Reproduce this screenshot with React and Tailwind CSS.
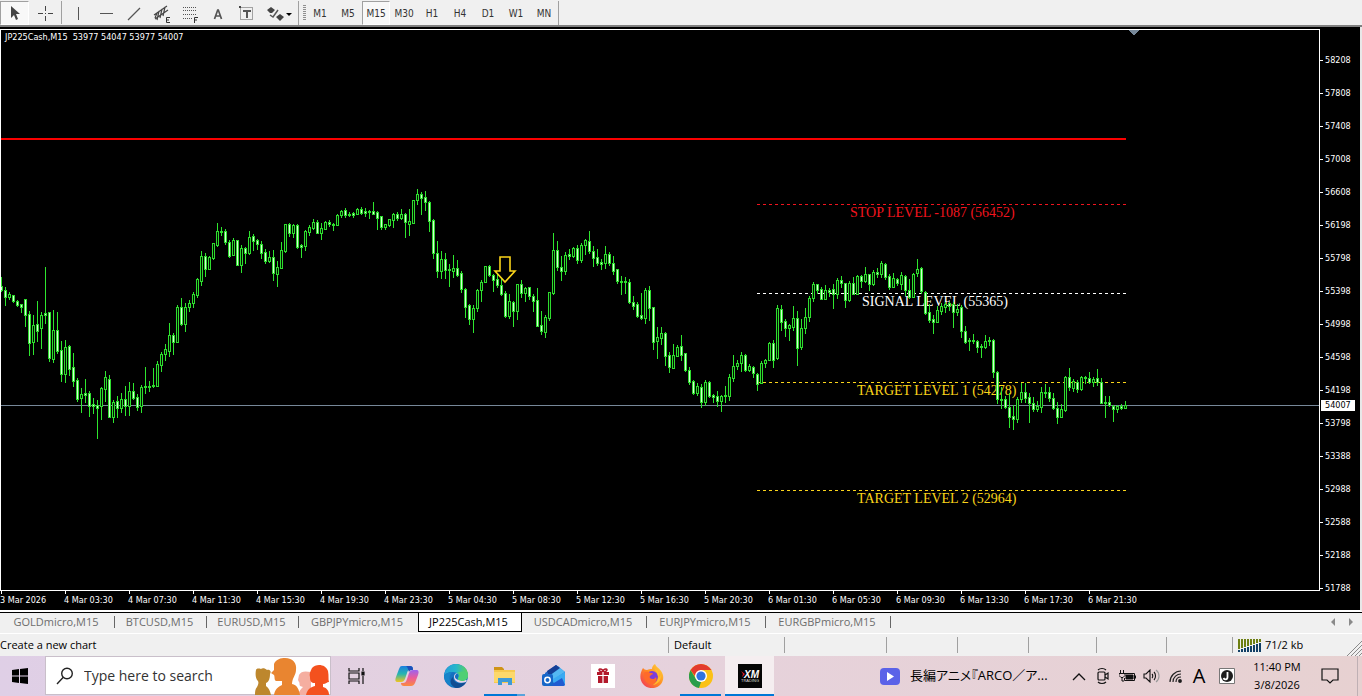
import React, { useState } from "react";
import clsx from "clsx";

// Candles, oldest first: [high, open, close, low] as y positions on the chart
const CANDLES = [
  [277, 286, 290, 291], [287, 290, 297, 305], [292, 297, 294, 299], [295, 295, 301, 302],
  [300, 301, 305, 306], [304, 304, 307, 312], [299, 299, 315, 326], [311, 314, 343, 355],
  [315, 342, 325, 354], [301, 324, 331, 341], [312, 328, 315, 348], [267, 313, 315, 323],
  [312, 312, 358, 361], [310, 359, 330, 362], [312, 330, 351, 353], [341, 350, 374, 381],
  [340, 374, 347, 382], [345, 346, 369, 375], [353, 367, 381, 386], [378, 380, 399, 401],
  [388, 398, 394, 412], [379, 393, 395, 402], [391, 393, 406, 416], [398, 404, 406, 413],
  [400, 405, 408, 438], [387, 406, 388, 419], [371, 389, 377, 401], [375, 379, 417, 417],
  [400, 417, 402, 422], [396, 401, 408, 417], [393, 408, 399, 412], [386, 399, 406, 415],
  [382, 406, 391, 415], [383, 391, 398, 399], [394, 397, 407, 410], [385, 406, 387, 412],
  [367, 386, 387, 393], [381, 386, 387, 391], [368, 385, 386, 387], [361, 386, 364, 386],
  [352, 365, 354, 371], [344, 354, 349, 360], [323, 351, 335, 356], [333, 335, 342, 354],
  [305, 342, 307, 342], [298, 307, 324, 325], [303, 324, 307, 331], [300, 307, 303, 311],
  [292, 303, 294, 307], [278, 295, 279, 297], [251, 281, 256, 285], [253, 256, 269, 276],
  [256, 269, 257, 269], [243, 258, 243, 259], [223, 245, 231, 246], [227, 231, 232, 235],
  [229, 231, 242, 244], [240, 242, 256, 257], [238, 255, 240, 255], [240, 240, 265, 265],
  [245, 265, 248, 272], [247, 248, 253, 263], [231, 253, 237, 254], [234, 236, 241, 250],
  [239, 240, 244, 249], [241, 244, 253, 258], [249, 252, 261, 263], [251, 261, 257, 262],
  [250, 257, 273, 280], [261, 274, 267, 286], [242, 268, 250, 268], [224, 251, 224, 252],
  [223, 224, 233, 236], [224, 233, 225, 237], [224, 225, 247, 248], [244, 245, 247, 257],
  [230, 246, 231, 250], [225, 232, 227, 235], [219, 228, 222, 229], [220, 222, 233, 233],
  [223, 233, 228, 239], [221, 229, 222, 229], [220, 222, 224, 226], [223, 224, 225, 230],
  [214, 225, 215, 225], [210, 215, 211, 217], [208, 210, 215, 217], [212, 214, 215, 216],
  [212, 213, 215, 217], [208, 214, 209, 214], [207, 209, 213, 214], [208, 211, 213, 216],
  [210, 211, 212, 218], [202, 211, 214, 214], [211, 212, 218, 229], [216, 216, 227, 229],
  [224, 227, 224, 229], [219, 225, 219, 226], [213, 220, 214, 227], [212, 214, 218, 220],
  [209, 218, 214, 219], [213, 214, 222, 237], [209, 224, 221, 235], [200, 223, 200, 223],
  [189, 200, 194, 204], [192, 194, 198, 214], [191, 197, 202, 210], [201, 202, 221, 231],
  [219, 220, 253, 258], [241, 253, 271, 277], [251, 271, 259, 278], [253, 259, 270, 278],
  [264, 269, 270, 286], [255, 271, 268, 277], [260, 268, 275, 276], [271, 273, 289, 292],
  [288, 289, 307, 317], [304, 305, 319, 324], [305, 319, 308, 332], [289, 308, 290, 311],
  [280, 290, 282, 301], [266, 282, 266, 282], [265, 266, 275, 276], [274, 275, 280, 291],
  [274, 279, 285, 287], [278, 285, 294, 295], [291, 293, 316, 317], [294, 316, 301, 318],
  [301, 302, 311, 326], [284, 311, 284, 319], [280, 284, 293, 297], [287, 293, 288, 301],
  [287, 287, 296, 299], [294, 296, 301, 311], [288, 300, 326, 326], [311, 325, 331, 334],
  [315, 332, 317, 337], [292, 318, 292, 320], [233, 293, 250, 294], [241, 250, 267, 270],
  [256, 267, 271, 280], [252, 271, 255, 274], [249, 254, 256, 259], [247, 256, 248, 257],
  [245, 248, 260, 263], [243, 260, 245, 262], [239, 245, 240, 254], [231, 241, 251, 253],
  [246, 251, 258, 266], [249, 257, 263, 265], [259, 262, 264, 269], [246, 263, 254, 268],
  [252, 254, 263, 265], [256, 263, 271, 274], [269, 269, 281, 283], [276, 281, 282, 294],
  [277, 281, 282, 293], [279, 282, 302, 303], [296, 302, 306, 309], [302, 304, 316, 317],
  [293, 315, 318, 319], [288, 318, 290, 323], [286, 290, 308, 320], [307, 307, 342, 349],
  [327, 341, 337, 358], [327, 338, 333, 344], [332, 333, 356, 365], [352, 355, 367, 372],
  [344, 368, 355, 368], [345, 356, 347, 356], [335, 346, 355, 360], [353, 353, 370, 371],
  [367, 370, 382, 384], [380, 381, 393, 394], [383, 393, 386, 395], [384, 387, 402, 407],
  [380, 402, 382, 405], [381, 382, 396, 397], [394, 395, 397, 402], [391, 396, 401, 406],
  [395, 401, 396, 411], [386, 395, 396, 402], [374, 396, 377, 400], [355, 378, 366, 381],
  [360, 366, 363, 369], [352, 363, 355, 371], [354, 355, 370, 371], [364, 370, 366, 371],
  [366, 367, 373, 377], [373, 374, 384, 390], [361, 383, 363, 383], [359, 363, 360, 367],
  [342, 360, 343, 360], [340, 343, 360, 367], [305, 358, 308, 359], [305, 309, 322, 330],
  [319, 321, 328, 336], [324, 328, 325, 340], [306, 327, 318, 330], [311, 318, 348, 365],
  [319, 347, 328, 349], [308, 328, 317, 333], [296, 317, 298, 321], [282, 298, 284, 301],
  [284, 284, 290, 293], [287, 289, 299, 299], [285, 299, 290, 299], [288, 290, 292, 296],
  [284, 289, 294, 308], [278, 294, 280, 298], [276, 280, 283, 287], [283, 283, 300, 307],
  [281, 300, 283, 301], [277, 283, 294, 294], [275, 294, 276, 294], [275, 276, 281, 287],
  [267, 281, 274, 282], [274, 274, 284, 290], [270, 284, 272, 285], [268, 272, 274, 277],
  [261, 274, 263, 277], [263, 264, 277, 279], [274, 276, 287, 289], [273, 287, 278, 287],
  [278, 279, 283, 285], [272, 284, 275, 289], [275, 276, 290, 295], [279, 290, 297, 298],
  [273, 297, 274, 297], [259, 273, 269, 276], [267, 268, 291, 293], [291, 292, 313, 314],
  [304, 312, 320, 322], [315, 319, 322, 333], [306, 322, 310, 322], [303, 311, 306, 314],
  [302, 307, 304, 312], [302, 303, 306, 310], [302, 304, 312, 327], [304, 312, 309, 315],
  [305, 307, 331, 337], [326, 331, 342, 343], [338, 340, 341, 350], [334, 340, 341, 343],
  [340, 341, 347, 352], [344, 346, 347, 357], [335, 347, 341, 348], [337, 340, 341, 345],
  [339, 340, 372, 377], [371, 372, 399, 403], [387, 399, 400, 408], [396, 399, 407, 408],
  [393, 407, 417, 427], [405, 416, 419, 429], [397, 419, 399, 422], [383, 399, 392, 402],
  [383, 392, 398, 402], [393, 397, 403, 422], [397, 403, 409, 411], [401, 409, 406, 411],
  [387, 407, 392, 412], [384, 392, 393, 397], [387, 392, 398, 401], [393, 398, 408, 409],
  [402, 408, 417, 423], [404, 417, 409, 417], [376, 410, 377, 411], [368, 377, 387, 390],
  [379, 388, 381, 391], [380, 382, 389, 392], [376, 389, 377, 390], [376, 377, 378, 383],
  [372, 378, 382, 383], [377, 382, 379, 386], [369, 378, 382, 385], [378, 382, 403, 403],
  [396, 402, 403, 417], [396, 402, 405, 406], [405, 406, 409, 421], [405, 409, 406, 412],
  [404, 406, 408, 409], [401, 408, 405, 408],
];

const LEVELS = [
  { y: 204, x: 850, color: "#f0141e", text: "STOP LEVEL -1087 (56452)" },
  { y: 293, x: 862, color: "#ffffff", text: "SIGNAL LEVEL (55365)" },
  { y: 382, x: 857, color: "#fad41a", text: "TARGET LEVEL 1 (54278)" },
  { y: 490, x: 857, color: "#fad41a", text: "TARGET LEVEL 2 (52964)" },
];

const PRICES = [
  58208, 57808, 57408, 57008, 56608, 56198, 55798, 55398, 54998, 54598, 54198,
  53798, 53388, 52988, 52588, 52188, 51788,
];

const TIMES = [
  "3 Mar 2026", "4 Mar 03:30", "4 Mar 07:30", "4 Mar 11:30", "4 Mar 15:30",
  "4 Mar 19:30", "4 Mar 23:30", "5 Mar 04:30", "5 Mar 08:30", "5 Mar 12:30",
  "5 Mar 16:30", "5 Mar 20:30", "6 Mar 01:30", "6 Mar 05:30", "6 Mar 09:30",
  "6 Mar 13:30", "6 Mar 17:30", "6 Mar 21:30",
];

const TIMEFRAMES = ["M1", "M5", "M15", "M30", "H1", "H4", "D1", "W1", "MN"];

const TABS = [
  { name: "GOLDmicro,M15", width: "w-[115px]" },
  { name: "BTCUSD,M15", width: "w-[92px]" },
  { name: "EURUSD,M15", width: "w-[92px]" },
  { name: "GBPJPYmicro,M15", width: "w-[119px]" },
  { name: "JP225Cash,M15", width: "w-[104px]" },
  { name: "USDCADmicro,M15", width: "w-[125px]" },
  { name: "EURJPYmicro,M15", width: "w-[119px]" },
  { name: "EURGBPmicro,M15", width: "w-[125px]" },
];

// Drawing tools
const TOOLS = [
  {
    name: "Vertical line",
    icon: <path d="M12.500 6v13" stroke="#555" />,
  },
  {
    name: "Horizontal line",
    icon: <path d="M6 12.500h13" stroke="#555" />,
  },
  {
    name: "Trendline",
    icon: <path d="M6 19 18 7" stroke="#555" strokeWidth="1.200" />,
  },
  {
    name: "Equidistant channel",
    icon: (
      <>
        <path
          d="M4 14 17 5M5 18 18 9M7 19 9 10M10 17l2-9M13 15l2-9M5 17l2-5"
          stroke="#444"
          strokeWidth="1.200"
        />
        <path d="M20 16.500h-3.500v5H20M16.500 19H19" stroke="#333" />
      </>
    ),
  },
  {
    name: "Fibonacci retracement",
    icon: (
      <>
        <path
          d="M5 6.500h14M5 9.500h14M5 13.500h14M5 17.500h9"
          stroke="#555"
          strokeDasharray="1 1"
        />
        <path d="M20 16.500h-3.500V22M16.500 19H19" stroke="#333" />
      </>
    ),
  },
  {
    name: "Text",
    icon: <path d="m8.500 18 3.200-9h.6l3.200 9M9.700 15h4.600" stroke="#555" strokeWidth="1.700" />,
  },
  {
    name: "Text label",
    icon: (
      <>
        <rect x="6.500" y="6.500" width="12" height="12" stroke="#555" strokeDasharray="1 1" />
        <path d="M9 10h8M13 10v7" stroke="#555" strokeWidth="2" />
        <path d="M5 5h2v2H5z" fill="#444" />
      </>
    ),
  },
];

function Candle({ x, data }) {
  const [high, open, close, low] = data;
  const top = Math.min(open, close);
  const bottom = Math.max(open, close);
  return (
    <g>
      <rect x={x} y={high} width="1" height={low - high + 1} fill="#2ee62e" />
      <rect x={x - 1} y={top} width="3" height={bottom - top + 1} fill="#2edc2e" />
      {bottom - top > 1 && (
        <rect
          x={x}
          y={top + 1}
          width="1"
          height={bottom - top - 1}
          fill={open > close ? "#001400" : "#d4ffd4"}
        />
      )}
    </g>
  );
}

function PriceChart() {
  return (
    <svg
      width="1318"
      height="560"
      viewBox="1 30 1318 560"
      shapeRendering="crispEdges"
      role="img"
      aria-label="JP225Cash, M15"
    >
      <path d="M1128 30h11l-5 5z" fill="#778899" />
      <rect x="1" y="138" width="1125" height="2" fill="#fa0000" />
      {LEVELS.map((level) => (
        <g key={level.text}>
          <path
            d={`M757 ${level.y}.500H1126`}
            stroke={level.color}
            strokeDasharray="3 3"
          />
          <text
            x={level.x}
            y={level.y + 13}
            fill={level.color}
            className="text-[14px] font-['Georgia','Liberation_Serif',serif]"
          >
            {level.text}
          </text>
        </g>
      ))}
      <rect x="0" y="405" width="1320" height="1" fill="#778899" />
      {CANDLES.map((candle, index) => (
        <Candle key={index} x={1 + index * 4} data={candle} />
      ))}
      <path
        d="M500 257h10v14h5l-10 11-10-11h5z"
        fill="none"
        stroke="#fad41a"
        strokeWidth="1.600"
        shapeRendering="auto"
      />
    </svg>
  );
}

function Toolbar() {
  const [frame, setFrame] = useState("M15");
  return (
    <header className="flex h-[27px] shrink-0 items-stretch border-b-2 border-[#808080] bg-[#f0f0f0] pt-px font-['DejaVu_Sans_Condensed','DejaVu_Sans',sans-serif] text-[10px] text-[#333]">
      <button
        aria-label="Cursor"
        className="flex w-[29px] items-center justify-center border border-t-[#a0a0a0] border-r-white border-b-white border-l-[#a0a0a0] bg-[#f8f8f8]"
      >
        <svg width="12" height="16" viewBox="0 0 12 16" fill="#444">
          <path d="M2 1v12l3-3 2 5 2-1-2-5h4z" />
        </svg>
      </button>
      <button aria-label="Crosshair" className="flex w-[32px] items-center justify-center">
        <svg width="17" height="17" viewBox="0 0 17 17" stroke="#444">
          <path d="M8.500 1v5M8.500 11v5M1 8.500h5M11 8.500h5M8 8.500h1" />
        </svg>
      </button>
      <span className="mr-[2px] mb-px w-px bg-[#a0a0a0]" />
      {TOOLS.map((tool) => (
        <button
          key={tool.name}
          aria-label={tool.name}
          className="flex w-7 items-center justify-center"
        >
          <svg width="25" height="24" viewBox="0 0 25 24" fill="none">
            {tool.icon}
          </svg>
        </button>
      ))}
      <button aria-label="Arrows" className="flex w-[38px] items-center justify-center">
        <svg width="26" height="24" viewBox="0 0 26 24" fill="#444">
          <path d="m1 9 4-3 4 3-3 3H4zM10 16l4-3 4 3-4 4z" />
          <path d="m4 14 3 2 5-7" stroke="#555" fill="none" strokeWidth="1.500" />
          <path d="M20 12h6l-3 3z" fill="#000" />
        </svg>
      </button>
      <span className="w-px bg-[#a0a0a0]" />
      <span className="mx-1 my-1 w-[3px] bg-[repeating-linear-gradient(#909090_0_1px,#f0f0f0_1px_2px)]" />
      <div className="-ml-1 flex">
        {TIMEFRAMES.map((name) => (
          <button
            key={name}
            onClick={() => setFrame(name)}
            className={clsx(
              "w-7 border pt-px",
              frame === name
                ? "border-t-[#a0a0a0] border-r-white border-b-white border-l-[#a0a0a0] bg-[#f8f8f8]"
                : "border-transparent"
            )}
          >
            {name}
          </button>
        ))}
      </div>
      <span className="w-px bg-[#a0a0a0]" />
    </header>
  );
}

function ChartWindow() {
  return (
    <main className="flex-1 border-r-2 border-b border-r-[#e8e8e8] border-b-white bg-black pt-[2px] font-['DejaVu_Sans_Condensed','DejaVu_Sans',sans-serif] text-[9px] text-white">
      <div className="flex h-[562px]">
        <section className="relative min-w-0 flex-1 overflow-hidden border border-white">
          <PriceChart />
          <p className="absolute top-px left-1 whitespace-pre">
            JP225Cash,M15{"  "}53977 54047 53977 54007
          </p>
        </section>
        <aside className="relative w-10 shrink-0 pt-[15px]">
          {PRICES.map((price) => (
            <div key={price} className="flex h-[33px] items-center gap-[2px]">
              <span className="h-px w-[3px] bg-white" />
              {price}
            </div>
          ))}
          <span className="absolute top-[371px] left-px flex h-[11px] w-[34px] items-center bg-white pl-1 text-black">
            54007
          </span>
        </aside>
      </div>
      <div className="flex overflow-hidden">
        {TIMES.map((time) => (
          <div key={time} className="w-16 shrink-0">
            <div className="ml-px h-[3px] w-px bg-white" />
            <div className="h-4 whitespace-nowrap leading-[13px]">{time}</div>
          </div>
        ))}
      </div>
    </main>
  );
}

function ChartTabs() {
  const [active, setActive] = useState("JP225Cash,M15");
  const activeIndex = TABS.findIndex((tab) => tab.name === active);
  return (
    <nav className="mt-px flex h-[22px] shrink-0 items-start border-t border-b border-t-black border-b-white bg-[#f0f0f0] font-['Open_Sans',sans-serif] text-[11px] text-[#6d6d6d]">
      {TABS.map((tab, index) => (
        <button
          key={tab.name}
          onClick={() => setActive(tab.name)}
          className={clsx(
            "flex items-center justify-center pr-[3px] whitespace-nowrap",
            tab.width,
            index === activeIndex
              ? "h-[19px] border border-t-0 border-black bg-white text-black"
              : "relative h-[18px]"
          )}
        >
          {tab.name}
          {index !== activeIndex && index + 1 !== activeIndex && (
            <span className="absolute top-[3px] right-0 h-3 w-px bg-[#666]" />
          )}
        </button>
      ))}
      <div className="ml-auto flex h-[18px] items-center gap-3 pr-2">
        <button aria-label="Scroll left">
          <svg width="6" height="8" viewBox="0 0 6 8" fill="#8a8a8a">
            <path d="M5 0v8L1 4z" />
          </svg>
        </button>
        <button aria-label="Scroll right">
          <svg width="6" height="8" viewBox="0 0 6 8" fill="#8a8a8a">
            <path d="M1 0v8l4-4z" />
          </svg>
        </button>
      </div>
    </nav>
  );
}

function StatusBar() {
  const cell = "my-[3px] border-l border-[#a0a0a0]";
  return (
    <footer className="flex h-[22px] shrink-0 bg-[#f0f0f0] font-['Open_Sans',sans-serif] text-[11px] leading-4 text-black">
      <span className="my-[3px] flex-1">Create a new chart</span>
      <span className={clsx(cell, "w-[116px] pl-[5px]")}>Default</span>
      <span className={clsx(cell, "w-[102px]")} />
      <span className={clsx(cell, "w-[71px]")} />
      <span className={clsx(cell, "w-[71px]")} />
      <span className={clsx(cell, "w-[68px]")} />
      <span className={clsx(cell, "w-[70px]")} />
      <span className={clsx(cell, "w-[66px]")} />
      <span className={clsx(cell, "flex w-[115px] items-center gap-[3px] pl-[5px]")}>
        <svg width="24" height="13" viewBox="0 0 24 13" shapeRendering="crispEdges">
          {[0, 1, 2, 3, 4, 5, 6, 7].map((bar) => (
            <g key={bar}>
              <rect x={bar * 3} y="0" width="2" height={10 - bar} fill="#6d7f12" />
              <rect x={bar * 3} y={11 - bar} width="2" height={2 + bar} fill="#123f66" />
            </g>
          ))}
        </svg>
        71/2 kb
      </span>
      <svg width="15" height="15" viewBox="0 0 15 15" className="self-end" stroke="#8a8a8a">
        <path d="M0 15 15 0M4 15 15 4M8 15l7-7M12 15l3-3" />
      </svg>
    </footer>
  );
}

function PeopleArt() {
  return (
    <svg width="78" height="38" viewBox="0 0 78 38">
      <path d="M4 13c-1 5 0 9 2 11 1 2 0 4-1 6-2 2-2 5-2 8h16c-1-4-2-7-5-9v-3c3-1 4-5 4-9 2-3-1-5-3-4-2-2-5-2-6-1-3-1-5 0-5 1z" fill="#bd872d" />
      <path d="M47 18c2-4 6-4 12-3v23H46c1-4 3-6 5-8l-3-1c-1-2 0-3-1-4l-1-2z" fill="#f5aea0" />
      <path d="M22 7c2-5 7-6 11-6 8 0 12 5 11 12 0 5-4 8-4 14 5 1 7 5 8 11H22c1-6 4-8 8-10v-4h-6c-2-1-1-4-2-6l-3-2 3-3z" fill="#e98530" />
      <path d="M60 11c4-5 14-4 16 3 1 5 0 8 1 11-2 0-3 2-6 2v3c4 1 6 4 6 8H54c1-5 4-8 9-9v-3c-4 0-5-2-5-6-1-3 0-5 2-9z" fill="#f4511e" />
    </svg>
  );
}

const APPS = [
  {
    name: "Copilot",
    icon: (
      <>
        <defs>
          <linearGradient id="copilotLeft" x1="0" y1="0" x2="0" y2="1">
            <stop offset="0" stopColor="#1b7fe0" />
            <stop offset=".5" stopColor="#26b5b0" />
            <stop offset="1" stopColor="#f2c51d" />
          </linearGradient>
          <linearGradient id="copilotRight" x1="0" y1="0" x2="0" y2="1">
            <stop offset="0" stopColor="#9b62f0" />
            <stop offset=".5" stopColor="#ec5c98" />
            <stop offset="1" stopColor="#fb8b3d" />
          </linearGradient>
        </defs>
        <path d="M7 2h8c2 0 3 1 3 3h-2c-2 0-3 1-4 4l-2 6c-1 2-2 3-4 3H3c-3 0-3-2-2-5L4 5c1-2 1-3 3-3z" fill="url(#copilotLeft)" />
        <path d="M18 6h3c3 0 3 2 2 5l-3 8c-1 2-2 3-4 3H9c-2 0-3-1-3-3h2c2 0 3-1 4-4l2-6c1-2 2-3 4-3z" fill="url(#copilotRight)" />
        <path d="M11 2h4c2 0 3 1 3 4-2 0-3 0-4 2-1-2-1-5-3-6z" fill="#1c50ba" />
      </>
    ),
  },
  {
    name: "Microsoft Edge",
    icon: (
      <>
        <defs>
          <linearGradient id="edgeTop" x1="0" y1="0" x2="1" y2="0">
            <stop offset="0" stopColor="#249ddb" />
            <stop offset=".5" stopColor="#27b6cb" />
            <stop offset="1" stopColor="#5fd553" />
          </linearGradient>
        </defs>
        <circle cx="12" cy="12" r="12" fill="#1471c0" />
        <path d="M0 12C1 4 6 0 12 0c7 0 12 5 12 11 0 4-3 6-6 6-3 0-5-1-4-3 2-3-1-6-5-6-5 0-8 2-9 4z" fill="url(#edgeTop)" />
        <path d="M9 8c-4 2-6 10 2 15-7-1-11-6-11-11 2-3 5-4 9-4z" fill="#1683c9" />
        <path d="M9 13c0 6 7 8 13 5-2 4-6 6-10 6-6-2-7-8-3-11z" fill="#124d92" />
        <path d="M14 9c-4 1-6 9 8 7 1 0 1 1 0 2-5 2-12 0-12-5 0-2 1-4 4-4z" fill="#e9d7e8" />
        <path d="M13 9c3 0 3 3 1 5 0 2 2 3 4 3 3 0 6-2 6-6 0-3-5-5-11-2z" fill="#4fcf74" />
      </>
    ),
  },
  {
    name: "File Explorer",
    mark: "explorer",
    icon: (
      <>
        <path d="M1 3h8l2 2v4H1z" fill="#cf9417" />
        <path d="M1 6h21v13H1z" fill="#f6c94f" />
        <path d="M1 8h21v10H1z" fill="#fcd86a" />
        <path d="M5 21v-7h14v7h-4v-3H9v3z" fill="#3e9ad6" />
      </>
    ),
  },
  {
    name: "Outlook",
    icon: (
      <>
        <path d="M3 9 14 1l9 7v12H3z" fill="#2267c9" />
        <path d="m8 8 8-6 7 6-12 8z" fill="#54b8f2" />
        <path d="m5 7 9-6 4 3-11 8z" fill="#153f96" />
        <path d="m23 8-14 8 6 6h6c2 0 2-1 2-3z" fill="#3aaaf2" />
        <path d="M7 22 20 14l3 7c-1 1-2 1-3 1z" fill="#205bd0" />
        <rect x="0" y="10" width="11" height="12" rx="2" fill="#1766c8" />
        <circle cx="5.500" cy="16" r="2.700" fill="none" stroke="#fff" strokeWidth="1.500" />
      </>
    ),
  },
  {
    name: "Rewards",
    icon: (
      <>
        <path d="M0 0h24v24H0z" fill="#fff" />
        <path d="M6 8h12v3H6zM7 12h10v7H7z" fill="#b3182b" />
        <path d="M12 8C8 8 7 5 9 5s3 1 3 3c0-2 1-3 3-3s1 3-3 3z" fill="none" stroke="#b3182b" strokeWidth="1.500" />
        <path d="M12 8v11M6 11.500h12" stroke="#fff" strokeWidth="1.200" />
      </>
    ),
  },
  {
    name: "Firefox",
    icon: (
      <>
        <defs>
          <linearGradient id="foxBody" x1="1" y1="0" x2="0" y2="1">
            <stop offset="0" stopColor="#ffe03d" />
            <stop offset=".5" stopColor="#ff8a22" />
            <stop offset="1" stopColor="#f02d5f" />
          </linearGradient>
        </defs>
        <path d="M3 4c1 1 2 2 4 2 2-1 3-1 5-1 0-2 1-4 3-5 1 3 4 4 6 7 3 4 3 9 0 13-5 6-14 5-18 0C-1 15 0 9 3 4z" fill="url(#foxBody)" />
        <circle cx="12" cy="13" r="6" fill="#7a3ddb" />
        <path d="M4 9c3-2 5-1 6 0 2 0 3 0 3 1-2 1-4 2-3 4 2 2 5 1 6-1 2 4-2 8-6 7-4-1-7-5-6-11z" fill="#ff6a2a" />
        <path d="M14 4c5 2 6 7 4 10 2-1 3-3 3-5 1 6-2 11-8 12 8-5 5-12 1-17z" fill="#ffbd2e" />
      </>
    ),
  },
  {
    name: "Google Chrome",
    mark: "full",
    icon: (
      <>
        <circle cx="12" cy="12" r="12" fill="#fbc116" />
        <path d="M1.600 6 7 15l5 3-2 6A12 12 0 0 1 1.600 6z" fill="#2a9d4a" />
        <path d="M1.600 6C4 2 8 0 12 0s8 2 10.400 6H12L6 12z" fill="#e33b2e" />
        <circle cx="12" cy="12" r="6" fill="#fff" />
        <circle cx="12" cy="12" r="4.600" fill="#2f73e0" />
      </>
    ),
  },
  {
    name: "XM Trading",
    mark: "active",
    icon: (
      <>
        <path d="M0 0h24v24H0z" fill="#050505" />
        <path d="m3 7 4 3-3 3 1-3z" fill="#e01b24" />
        <text x="6" y="14" fill="#fff" className="text-[10px] font-bold italic font-['Liberation_Sans',sans-serif]">
          XM
        </text>
        <text x="3" y="18" fill="#ddd" className="text-[4px] font-['Liberation_Sans',sans-serif]">
          TRADING
        </text>
      </>
    ),
  },
];

function Tray() {
  return (
    <div className="flex items-center text-black">
      <button aria-label="Show hidden icons" className="flex w-6 justify-center">
        <svg width="14" height="9" viewBox="0 0 14 9" fill="none" stroke="#111" strokeWidth="1.300">
          <path d="m1 8 6-6 6 6" />
        </svg>
      </button>
      <button aria-label="Meet now" className="flex w-6 justify-center">
        <svg width="14" height="18" viewBox="0 0 14 18" fill="none" stroke="#111" strokeWidth="1.200">
          <rect x="2" y="5" width="7" height="8" rx="1" />
          <path d="m9 8 3-2v6l-3-2M2 3c2-2 6-2 8 0M2 15c2 2 6 2 8 0" />
        </svg>
      </button>
      <button aria-label="Battery" className="flex w-6 justify-center">
        <svg width="17" height="12" viewBox="0 0 17 12" fill="none" stroke="#111">
          <path d="M6 3.500h9.500v7h-10V8M16.500 5.500v3M1.500 0v3M4.500 0v3M0 3.500h6v2l-2 2H2l-2-2zM3 7v4h2" />
          <path d="M7 5h7v4H7z" fill="#111" />
        </svg>
      </button>
      <button aria-label="Volume" className="flex w-6 justify-center">
        <svg width="17" height="14" viewBox="0 0 17 14" fill="none" stroke="#111" strokeWidth="1.100">
          <path d="M1 5h2l4-4v12L3 9H1zM9 5c1 1 1 3 0 4" />
          <path d="M11 3c2 2 2 6 0 8" />
          <path d="M13 1c4 3 4 9 0 12" stroke="#999" />
        </svg>
      </button>
      <button aria-label="Network" className="flex w-6 justify-center">
        <svg width="13" height="13" viewBox="0 0 13 13" fill="none" stroke="#222" strokeWidth="1.200">
          <path d="M1 12C1 6 6 1 12 1M4 12c0-5 4-8 8-8M7 12c0-3 2-5 5-5" />
          <circle cx="11" cy="11" r="1.300" fill="#111" />
        </svg>
      </button>
      <button className="w-6 font-['Open_Sans',sans-serif] text-[20px] leading-6">A</button>
      <button aria-label="Input mode" className="ml-1 flex w-6 justify-center">
        <svg width="16" height="16" viewBox="0 0 16 16">
          <path d="M.5.5h15v15H.5z" fill="#fff" stroke="#777" />
          <circle cx="8" cy="8" r="6" fill="#1d1d1d" />
          <path d="M8.500 4v5c0 3-3 3-4 1" fill="none" stroke="#fff" strokeWidth="1.800" />
        </svg>
      </button>
    </div>
  );
}

function Taskbar() {
  return (
    <div className="flex h-10 shrink-0 items-stretch bg-linear-to-r from-[#dfcfe6] via-[#e6d2dc] to-[#e7d1d1] font-['Open_Sans',sans-serif] text-black">
      <button aria-label="Start" className="flex w-[45px] items-center justify-center pr-[5px]">
        <svg width="16" height="16" viewBox="0 0 16 16">
          <path d="m0 2 7-1v6.500H0zM8 1l8-1v7.500H8zM0 8.500h7V15l-7-1zM8 8.500h8V16l-8-1z" />
        </svg>
      </button>
      <label className="mb-px flex w-[286px] items-center border border-[#c9bfca] bg-white pl-[10px]">
        <svg width="18" height="18" viewBox="0 0 18 18" fill="none" stroke="#222" strokeWidth="1.400">
          <circle cx="11" cy="6.500" r="5.300" />
          <path d="M7.300 10.300 1 17" />
        </svg>
        <input
          type="text"
          aria-label="Search"
          placeholder="Type here to search"
          className="ml-[10px] min-w-0 flex-1 text-sm outline-none placeholder:text-[#333]"
        />
        <PeopleArt />
      </label>
      <button aria-label="Task View" className="flex w-[51px] items-center justify-center">
        <svg width="17" height="16" viewBox="0 0 17 16" fill="none" stroke="#111" strokeWidth="1.200">
          <path d="M1 0v3h10V0M1 16v-3h10v3M1 5h10v6H1zM15 0v3M15 8v8" />
          <path d="M14 4h2v3h-2z" fill="#111" />
        </svg>
      </button>
      {APPS.map((app) => (
        <button
          key={app.name}
          aria-label={app.name}
          className={clsx(
            "relative flex w-[49px] items-center justify-center",
            app.mark === "active" && "bg-[#f5eef0]"
          )}
        >
          <svg width="24" height="24" viewBox="0 0 24 24">
            {app.icon}
          </svg>
          {app.mark === "active" && (
            <span className="absolute inset-x-0 bottom-0 h-[2px] bg-[#0078d7]" />
          )}
          {app.mark === "full" && (
            <span className="absolute inset-x-1 bottom-0 h-[2px] bg-[#0078d7]" />
          )}
          {app.mark === "explorer" && (
            <span className="absolute inset-x-1 bottom-0 h-[2px] border-r-8 border-[#5aa3dc] bg-[#0078d7]" />
          )}
        </button>
      ))}
      <div className="ml-auto flex items-center">
        <button className="flex items-center gap-[10px]">
          <svg width="20" height="17" viewBox="0 0 20 17">
            <rect width="20" height="17" rx="4" fill="#5b62e8" />
            <path d="m7 4 7 4.500L7 13z" fill="#fff" />
          </svg>
          <span className="w-[157px] whitespace-nowrap text-left text-[13px] font-['Open_Sans','Noto_Sans_CJK_JP',sans-serif] [font-feature-settings:'palt']">
            長編アニメ『ARCO／ア...
          </span>
        </button>
        <Tray />
        <div className="w-[76px] text-center text-[11px] leading-[18px]">
          <div>11:40 PM</div>
          <div>3/8/2026</div>
        </div>
        <button aria-label="Notifications" className="flex w-[42px] justify-center pr-3">
          <svg width="18" height="17" viewBox="0 0 18 17" fill="none" stroke="#111" strokeWidth="1.200">
            <path d="M1 1h16v11h-5l-3 3-3-3H1z" />
          </svg>
        </button>
        <span className="mr-1 h-10 w-px bg-[#bfb0b4]" />
      </div>
    </div>
  );
}

export default function App() {
  return (
    <div className="flex min-h-screen flex-col overflow-hidden bg-white">
      <Toolbar />
      <ChartWindow />
      <ChartTabs />
      <StatusBar />
      <Taskbar />
    </div>
  );
}
